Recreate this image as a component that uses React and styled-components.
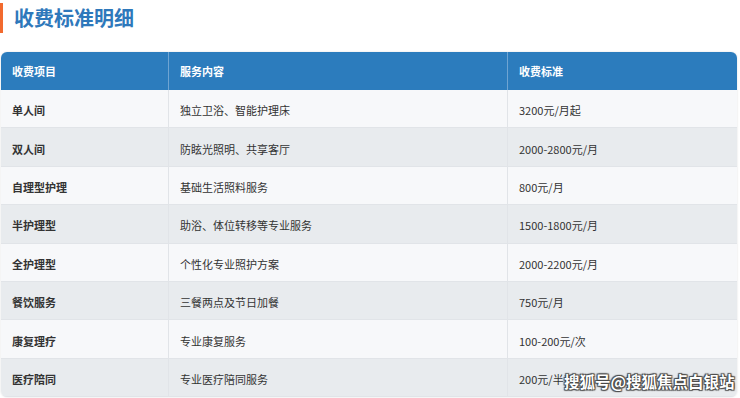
import React from "react";
import styled, { createGlobalStyle } from "styled-components";

const Global = createGlobalStyle`
  html, body { margin: 0; padding: 0; background: #fff; }
  body { font-family: "Noto Sans CJK SC", "Noto Sans", sans-serif; width: 740px; height: 398px; overflow: hidden; }
`;

const Page = styled.div`
  position: relative;
  width: 740px;
  height: 398px;
  overflow: hidden;
`;

const TitleRow = styled.div`
  display: flex;
  align-items: center;
  gap: 11px;
  padding-top: 3px;
  height: 30px;
`;

const Bar = styled.div`
  width: 3px;
  height: 30px;
  background: #f26a2e;
`;

const Title = styled.h2`
  margin: 0;
  font-size: 20px;
  line-height: 30px;
  font-weight: 700;
  color: #2e78bb;
`;

const Table = styled.div`
  margin: 19px 3px 0 1px;
  border-radius: 6px;
  overflow: hidden;
  box-shadow: 0 0 2px rgba(0, 0, 0, 0.15);
  display: grid;
  grid-template-columns: 167px 339px 1fr;
`;

const HeadCell = styled.div`
  height: 38px;
  display: flex;
  align-items: center;
  padding-left: 11px;
  background: #2c7cbd;
  color: #fff;
  font-size: 11px;
  font-weight: 700;
  border-left: ${(p) => (p.$first ? "none" : "1px solid #6fa4d2")};
`;

const Cell = styled.div`
  height: 38.4px;
  box-sizing: border-box;
  display: flex;
  align-items: center;
  padding: 3px 0 0 11px;
  background: ${(p) => (p.$alt ? "#e8ebee" : "#f7f8fa")};
  color: #333;
  font-size: 11px;
  font-weight: ${(p) => (p.$bold ? 700 : 400)};
  border-left: ${(p) => (p.$first ? "none" : "1px solid #e1e4e8")};
  border-bottom: 1px solid #e1e4e8;
  white-space: nowrap;
`;

const Watermark = styled.div`
  position: absolute;
  left: 564px;
  top: 370px;
  font-size: 15.5px;
  line-height: 22px;
  font-weight: 700;
  color: #fff;
  text-shadow: 0 0 1px #333, 0 0 1px #333, 1px 1px 1px #555, -1px -1px 1px #555, 1px -1px 1px #555, -1px 1px 1px #555;
  white-space: nowrap;
`;

const rows = [
  ["单人间", "独立卫浴、智能护理床", "3200元/月起"],
  ["双人间", "防眩光照明、共享客厅", "2000-2800元/月"],
  ["自理型护理", "基础生活照料服务", "800元/月"],
  ["半护理型", "助浴、体位转移等专业服务", "1500-1800元/月"],
  ["全护理型", "个性化专业照护方案", "2000-2200元/月"],
  ["餐饮服务", "三餐两点及节日加餐", "750元/月"],
  ["康复理疗", "专业康复服务", "100-200元/次"],
  ["医疗陪同", "专业医疗陪同服务", "200元/半天"],
];

export default function App() {
  return (
    <Page>
      <Global />
      <TitleRow>
        <Bar />
        <Title>收费标准明细</Title>
      </TitleRow>
      <Table>
        <HeadCell $first>收费项目</HeadCell>
        <HeadCell>服务内容</HeadCell>
        <HeadCell>收费标准</HeadCell>
        {rows.map((r, i) => (
          <React.Fragment key={i}>
            <Cell $first $bold $alt={i % 2 === 1}>{r[0]}</Cell>
            <Cell $alt={i % 2 === 1}>{r[1]}</Cell>
            <Cell $alt={i % 2 === 1}>{r[2]}</Cell>
          </React.Fragment>
        ))}
      </Table>
      <Watermark>搜狐号@搜狐焦点白银站</Watermark>
    </Page>
  );
}
